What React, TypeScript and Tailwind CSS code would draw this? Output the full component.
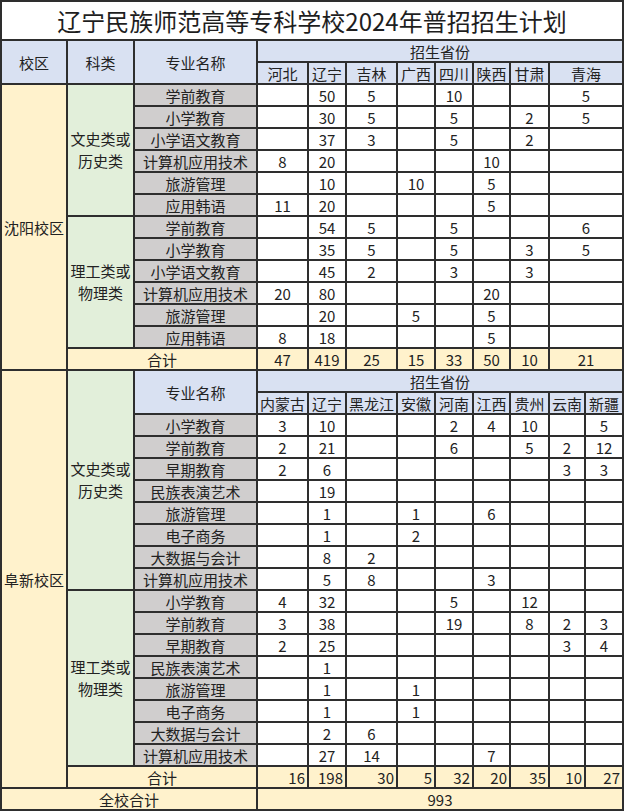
import React from "react";

type Row = { name: string; vals: string[] };

const upperWen: Row[] = [
  { name: "学前教育", vals: ["", "50", "5", "", "10", "", "", "5"] },
  { name: "小学教育", vals: ["", "30", "5", "", "5", "", "2", "5"] },
  { name: "小学语文教育", vals: ["", "37", "3", "", "5", "", "2", ""] },
  { name: "计算机应用技术", vals: ["8", "20", "", "", "", "10", "", ""] },
  { name: "旅游管理", vals: ["", "10", "", "10", "", "5", "", ""] },
  { name: "应用韩语", vals: ["11", "20", "", "", "", "5", "", ""] },
];
const upperLi: Row[] = [
  { name: "学前教育", vals: ["", "54", "5", "", "5", "", "", "6"] },
  { name: "小学教育", vals: ["", "35", "5", "", "5", "", "3", "5"] },
  { name: "小学语文教育", vals: ["", "45", "2", "", "3", "", "3", ""] },
  { name: "计算机应用技术", vals: ["20", "80", "", "", "", "20", "", ""] },
  { name: "旅游管理", vals: ["", "20", "", "5", "", "5", "", ""] },
  { name: "应用韩语", vals: ["8", "18", "", "", "", "5", "", ""] },
];
const upperTotal = ["47", "419", "25", "15", "33", "50", "10", "21"];

const lowerWen: Row[] = [
  { name: "小学教育", vals: ["3", "10", "", "", "2", "4", "10", "", "5"] },
  { name: "学前教育", vals: ["2", "21", "", "", "6", "", "5", "2", "12"] },
  { name: "早期教育", vals: ["2", "6", "", "", "", "", "", "3", "3"] },
  { name: "民族表演艺术", vals: ["", "19", "", "", "", "", "", "", ""] },
  { name: "旅游管理", vals: ["", "1", "", "1", "", "6", "", "", ""] },
  { name: "电子商务", vals: ["", "1", "", "2", "", "", "", "", ""] },
  { name: "大数据与会计", vals: ["", "8", "2", "", "", "", "", "", ""] },
  { name: "计算机应用技术", vals: ["", "5", "8", "", "", "3", "", "", ""] },
];
const lowerLi: Row[] = [
  { name: "小学教育", vals: ["4", "32", "", "", "5", "", "12", "", ""] },
  { name: "学前教育", vals: ["3", "38", "", "", "19", "", "8", "2", "3"] },
  { name: "早期教育", vals: ["2", "25", "", "", "", "", "", "3", "4"] },
  { name: "民族表演艺术", vals: ["", "1", "", "", "", "", "", "", ""] },
  { name: "旅游管理", vals: ["", "1", "", "1", "", "", "", "", ""] },
  { name: "电子商务", vals: ["", "1", "", "1", "", "", "", "", ""] },
  { name: "大数据与会计", vals: ["", "2", "6", "", "", "", "", "", ""] },
  { name: "计算机应用技术", vals: ["", "27", "14", "", "", "7", "", "", ""] },
];
const lowerTotal = ["16", "198", "30", "5", "32", "20", "35", "10", "27"];

const upperProv = ["河北", "辽宁", "吉林", "广西", "四川", "陕西", "甘肃", "青海"];
const lowerProv = ["内蒙古", "辽宁", "黑龙江", "安徽", "河南", "江西", "贵州", "云南", "新疆"];

function C({ className = "", children }: { className?: string; children?: React.ReactNode }) {
  return (
    <div className={"flex items-center justify-center overflow-hidden whitespace-nowrap " + className}>
      {children}
    </div>
  );
}

const BLUE = "bg-[#d9e1f2]";
const YEL = "bg-[#fff2cc]";
const GRN = "bg-[#e2efda]";
const GRAY = "bg-[#d0cece]";
const WHITE = "bg-white";

function UpperRows({ rows, first }: { rows: Row[]; first: React.ReactNode }) {
  return (
    <>
      {rows.map((r, i) => (
        <React.Fragment key={i}>
          {i === 0 && first}
          <C className={GRAY}>{r.name}</C>
          {r.vals.map((v, j) => (
            <C key={j} className={WHITE + (j === 7 ? " col-span-2" : "")}>
              {v}
            </C>
          ))}
        </React.Fragment>
      ))}
    </>
  );
}

function LowerRows({ rows, first }: { rows: Row[]; first: React.ReactNode }) {
  return (
    <>
      {rows.map((r, i) => (
        <React.Fragment key={i}>
          {i === 0 && first}
          <C className={GRAY}>{r.name}</C>
          {r.vals.map((v, j) => (
            <C key={j} className={WHITE}>
              {v}
            </C>
          ))}
        </React.Fragment>
      ))}
    </>
  );
}

export default function App() {
  return (
    <div
      className="w-[624px] h-[811px] bg-[#2e2e2e] p-[2px] grid gap-[2px] grid-cols-[64px_65px_121px_49px_36px_49px_36px_36px_35px_37px_34px_36px] grid-rows-[37px_repeat(35,20px)] text-[15px] leading-none text-[#222]"
      style={{ fontFamily: '"Noto Sans CJK SC", "Noto Sans", sans-serif' }}
    >
      <C className={WHITE + " col-span-12 text-[24px] text-[#1e1e1e]"}>辽宁民族师范高等专科学校2024年普招招生计划</C>

      {/* upper header */}
      <C className={BLUE + " row-span-2"}>校区</C>
      <C className={BLUE + " row-span-2"}>科类</C>
      <C className={BLUE + " row-span-2"}>专业名称</C>
      <C className={BLUE + " col-span-9"}>招生省份</C>
      {upperProv.map((p, j) => (
        <C key={p} className={BLUE + (j === 7 ? " col-span-2" : "")}>
          {p}
        </C>
      ))}

      <UpperRows
        rows={upperWen}
        first={
          <>
            <C className={YEL + " row-span-13"}>沈阳校区</C>
            <C className={GRN + " row-span-6 flex-col leading-[22px]"}>
              <span>文史类或</span>
              <span>历史类</span>
            </C>
          </>
        }
      />
      <UpperRows
        rows={upperLi}
        first={
          <C className={GRN + " row-span-6 flex-col leading-[22px]"}>
            <span>理工类或</span>
            <span>物理类</span>
          </C>
        }
      />
      <C className={YEL + " col-span-2"}>合计</C>
      {upperTotal.map((v, j) => (
        <C key={j} className={YEL + (j === 7 ? " col-span-2" : "")}>
          {v}
        </C>
      ))}

      {/* lower */}
      <C className={YEL + " row-span-19"}>阜新校区</C>
      <C className={GRN + " row-span-10 flex-col leading-[22px]"}>
        <span>文史类或</span>
        <span>历史类</span>
      </C>
      <C className={BLUE + " row-span-2"}>专业名称</C>
      <C className={BLUE + " col-span-9"}>招生省份</C>
      {lowerProv.map((p) => (
        <C key={p} className={BLUE}>
          {p}
        </C>
      ))}
      <LowerRows rows={lowerWen} first={null} />
      <LowerRows
        rows={lowerLi}
        first={
          <C className={GRN + " row-span-8 flex-col leading-[22px]"}>
            <span>理工类或</span>
            <span>物理类</span>
          </C>
        }
      />
      <C className={YEL + " col-span-2"}>合计</C>
      {lowerTotal.map((v, j) => (
        <C key={j} className={YEL + " !justify-end pr-[2px]"}>
          {v}
        </C>
      ))}
      <C className={YEL + " col-span-3"}>全校合计</C>
      <C className={YEL + " col-span-9"}>993</C>
    </div>
  );
}
